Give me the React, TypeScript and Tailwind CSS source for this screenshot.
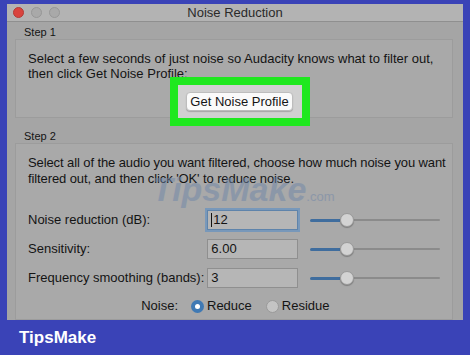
const FONT = "font-['Liberation_Sans',Arial,sans-serif]";

type Row = { label: string; value: string; focused?: boolean };

const ROWS: Row[] = [
  { label: "Noise reduction (dB):", value: "12", focused: true },
  { label: "Sensitivity:", value: "6.00" },
  { label: "Frequency smoothing (bands):", value: "3" },
];

function Slider() {
  return (
    <div className="relative flex h-[20px] w-[130px] items-center">
      <div className="h-[3px] w-[30px] rounded-l-full bg-[#3f6d9e]" />
      <div className="h-[2px] flex-1 rounded-r-full bg-[#8b8b8b]" />
      {/* thumb */}
      <div className="absolute left-[30px] top-[3px] size-[14px] rounded-full border border-[#9a9a9a] bg-[#d3d3d3] shadow-[0_1px_1px_rgba(0,0,0,0.25)]" />
    </div>
  );
}

export default function App() {
  return (
    <div className={`flex h-[355px] w-[470px] flex-col overflow-hidden bg-[#3a43b7] ${FONT} text-[#141414]`}>
      <div className="ml-[7px] mt-[4px] flex h-[316px] w-[456px] flex-col bg-[#a5a5a5]">
        {/* title bar */}
        <div className="relative flex h-[18px] items-center border-b border-[#8f8f8f] bg-[#b3b3b3] px-[6px]">
          <div className="flex gap-[7px]">
            <span className="size-[11px] rounded-full border border-[#b33a36] bg-[#d9443e]" />
            <span className="size-[11px] rounded-full border border-[#979797] bg-[#a9a9a9]" />
            <span className="size-[11px] rounded-full border border-[#979797] bg-[#a9a9a9]" />
          </div>
          <p className="absolute inset-x-0 text-center text-[13px] leading-[18px] text-[#2a2a2a]">
            Noise Reduction
          </p>
        </div>

        <div className="relative flex flex-1 flex-col pl-[8px] pr-[10px] pt-[3px]">
          <p className="h-[14px] pl-[9px] text-[11px] leading-[14px]">Step 1</p>
          <div className="flex h-[79px] flex-col border border-[#9c9c9c] bg-[#a9a9a9] px-[12px] pt-[11px]">
            <p className="whitespace-nowrap text-[13px] leading-[15px]">
              Select a few seconds of just noise so Audacity knows what to filter out,
              <br />
              then click Get Noise Profile:
            </p>
            <div className="relative z-10 -mt-[4px] ml-[11px] flex h-[49px] w-[140px] shrink-0 items-center justify-center self-center border-[8px] border-[#1fe81f] bg-[#d0d0d0]">
              <button className="h-[19px] w-[107px] rounded-[4px] border border-[#bdbdbd] bg-[#fafafa] text-[13px] leading-[17px] text-[#151515] shadow-[0_1px_1px_rgba(0,0,0,0.2)]">
                Get Noise Profile
              </button>
            </div>
          </div>

          <p className="mt-[11px] h-[14px] pl-[9px] text-[11px] leading-[14px]">Step 2</p>
          <div className="flex flex-1 flex-col border border-[#9c9c9c] bg-[#a9a9a9] px-[12px] pt-[11px]">
            <p className="whitespace-nowrap text-[13px] leading-[16px] tracking-[-0.1px]">
              Select all of the audio you want filtered, choose how much noise you want
              <br />
              filtered out, and then click 'OK' to reduce noise.
            </p>

            <div className="mt-[23px] flex flex-col gap-[9px]">
              {ROWS.map((row) => (
                <div key={row.label} className="flex h-[20px] items-center">
                  <span className="w-[180px] text-[13px]">{row.label}</span>
                  <div
                    className={`flex h-[20px] w-[91px] items-center border bg-[#b6b6b6] pl-[3px] text-[13px] ${
                      row.focused
                        ? "border-[#5f84ab] shadow-[0_0_0_2px_#7898ba]"
                        : "border-[#8f8f8f]"
                    }`}
                  >
                    {row.focused && <span className="mr-[1px] h-[14px] w-px bg-[#111]" />}
                    {row.value}
                  </div>
                  <div className="ml-[12px]">
                    <Slider />
                  </div>
                </div>
              ))}
            </div>

            <div className="mt-[10px] flex h-[16px] items-center text-[13px]">
              <span className="w-[150px] text-right">Noise:</span>
              <span className="ml-[13px] flex size-[13px] items-center justify-center rounded-full bg-[#3f79b4]">
                <span className="size-[5px] rounded-full bg-white" />
              </span>
              <span className="ml-[3px]">Reduce</span>
              <span className="ml-[14px] size-[13px] rounded-full border border-[#9a9a9a] bg-[#c4c4c4]" />
              <span className="ml-[3px]">Residue</span>
            </div>
          </div>

          {/* watermark */}
          <p className="pointer-events-none absolute left-[145px] top-[150px] flex items-baseline text-[34px] font-bold italic leading-none text-[#6f86a8] opacity-50">
            TipsMake<span className="text-[13px] font-normal not-italic">.com</span>
          </p>
        </div>
      </div>

      <div className="flex flex-1 items-center pl-[19px]">
        <span className="text-[17px] font-bold text-white">TipsMake</span>
      </div>
    </div>
  );
}
